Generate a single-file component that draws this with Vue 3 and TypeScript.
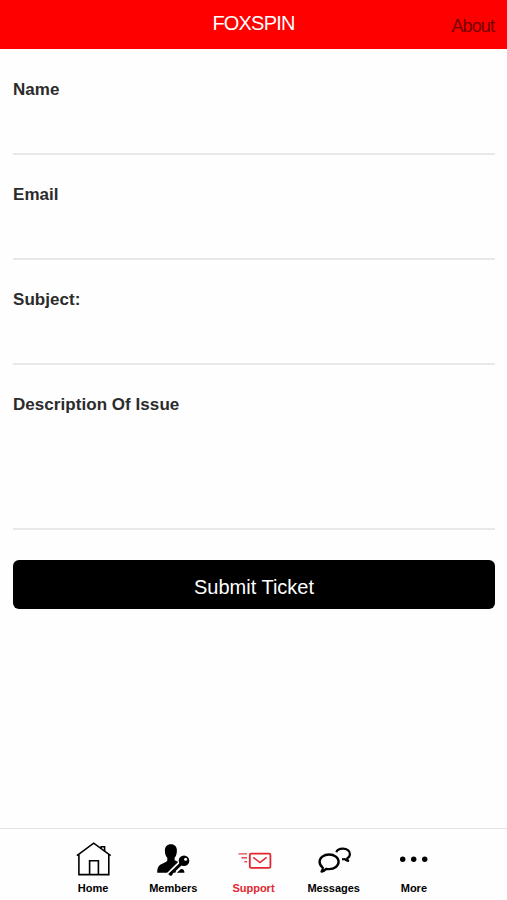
<script setup lang="ts">
import { reactive, ref } from 'vue'

type TabId = 'home' | 'members' | 'support' | 'messages' | 'more'

interface Tab {
  id: TabId
  label: string
}

const tabs: Tab[] = [
  { id: 'home', label: 'Home' },
  { id: 'members', label: 'Members' },
  { id: 'support', label: 'Support' },
  { id: 'messages', label: 'Messages' },
  { id: 'more', label: 'More' },
]

const active = ref<TabId>('support')
const ticket = reactive({ name: '', email: '', subject: '', description: '' })
</script>

<template>
  <div class="screen">
    <header class="header">
      <h1 class="title">FOXSPIN</h1>
      <a class="about">About</a>
    </header>

    <form class="form" @submit.prevent>
      <label class="field">
        <span class="label">Name</span>
        <input v-model="ticket.name" class="input" type="text" />
      </label>
      <label class="field">
        <span class="label">Email</span>
        <input v-model="ticket.email" class="input" type="email" />
      </label>
      <label class="field">
        <span class="label">Subject:</span>
        <input v-model="ticket.subject" class="input" type="text" />
      </label>
      <label class="field tall">
        <span class="label">Description Of Issue</span>
        <textarea v-model="ticket.description" class="input"></textarea>
      </label>
      <button class="submit" type="submit">Submit Ticket</button>
    </form>

    <nav class="tabbar">
      <button
        v-for="tab in tabs"
        :key="tab.id"
        type="button"
        class="tab"
        :class="{ active: active === tab.id }"
        @click="active = tab.id"
      >
        <svg class="icon" viewBox="0 0 40 40" fill="none" stroke="currentColor">
          <g v-if="tab.id === 'home'" stroke-width="1.6">
            <path d="M3.9 15.6 20.7 3.2l17 12.4" />
            <path d="M5.9 14.5v20.1h29.9V14.5" />
            <path d="M16.6 34.5V20.8h8.8v13.7" />
            <path d="M28.2 8.3V6.8h3.4v4.6" />
          </g>
          <g v-else-if="tab.id === 'members'" fill="currentColor" stroke="none">
            <path d="M17.9 4.300c3.800 0 6 2.500 6 6.200 0 3.200-.8 5.700-2.300 7.200v2.500l7 3L17.500 32.700H4.200c0-3.600.6-6.600 3.400-8.200 2.900-1.500 6-2.200 6.700-4v-2.800c-1.600-1.500-2.400-4-2.400-7.200 0-3.700 2.200-6.200 6-6.200z" />
            <path d="M23.800 32.700l3.600-3.200c.8-.8 1.300-.2 2-.2 1.200 0 2 1.500 2 3.400z" />
            <path d="M28 23.500 16.300 35" stroke="#fefefe" stroke-width="6" />
            <circle cx="31" cy="20.800" r="6.400" fill="#fefefe" />
            <path d="M29 22.900 16.300 35" stroke="currentColor" stroke-width="3" />
            <path d="M20.500 30.300l2 2.100M17.400 33l1.500 2.200" stroke="currentColor" stroke-width="1.800" />
            <circle cx="31" cy="20.800" r="5.300" />
            <circle cx="32.600" cy="19.200" r="1.500" fill="#fefefe" />
          </g>
          <g v-else-if="tab.id === 'support'">
            <rect x="15.800" y="13.600" width="20.600" height="14.200" rx="1.400" stroke-width="1.800" />
            <path d="M19.300 17.300 25.900 22.500l6.700-5.200" stroke-width="1.500" />
            <path d="M4.500 13.900H13M7.500 17.700H13M10.400 21.700H13" stroke-width="1.400" opacity="0.85" />
          </g>
          <g v-else-if="tab.id === 'messages'" stroke-width="2.400" stroke-linejoin="round">
            <path d="M8.700 27.600C6.700 26.100 5.600 24.200 5.600 21.800c0-4.100 4.100-7.300 9.500-7.300s9.500 3.200 9.500 7.300-4.100 7.300-9.500 7.300c-1 0-1.900-.1-2.800-.3-1.300 1.500-2.700 2.400-4.700 2.800 1-1.200 1.300-2.300 1.100-4z" />
            <path d="M22.400 12.300c.5-2.200 3.200-3.700 6.600-3.700 3.900 0 6.900 2.300 6.900 5.300 0 1.900-1 3.400-2.600 4.400-.1 1 .2 1.700.9 2.600-1.500-.2-2.500-.7-3.300-1.800-.9.200-1.500.2-2.800 0" stroke-width="2.200" />
          </g>
          <g v-else fill="currentColor" stroke="none">
            <circle cx="8.700" cy="19.300" r="2.700" />
            <circle cx="19.700" cy="19.300" r="2.700" />
            <circle cx="30.700" cy="19.300" r="2.700" />
          </g>
        </svg>
        <span class="tab-label">{{ tab.label }}</span>
      </button>
    </nav>
  </div>
</template>

<style>
body {
  margin: 0;
  background: #fefefe;
}
</style>

<style scoped>
.screen {
  display: flex;
  flex-direction: column;
  height: 900px;
  overflow: hidden;
  background: #fefefe;
  font-family: "Liberation Sans", Arial, sans-serif;
}

.header {
  display: grid;
  grid-template-columns: 1fr auto 1fr;
  box-sizing: border-box;
  height: 49px;
  flex: none;
  padding: 0 13px;
  background: #fe0000;
}

.title {
  grid-column: 2;
  margin: 0;
  padding-top: 12px;
  color: #fff;
  font-size: 20px;
  font-weight: 400;
  line-height: 23px;
  letter-spacing: -0.8px;
}

.about {
  justify-self: end;
  padding-top: 14px;
  color: #750000;
  font-size: 18px;
  line-height: 24px;
  letter-spacing: -0.9px;
}

.form {
  display: flex;
  flex-direction: column;
  flex: 1;
  padding: 1px 12px 0 13px;
}

.field {
  display: flex;
  flex-direction: column;
  box-sizing: border-box;
  height: 105px;
  padding-top: 30px;
  border-bottom: 2px solid #e8e8e8;
}

.field.tall {
  height: 165px;
}

.label {
  color: #2b2b2b;
  font-size: 17px;
  font-weight: 700;
  line-height: 20px;
  letter-spacing: 0.05px;
}

.input {
  flex: 1;
  min-height: 0;
  padding: 0;
  border: 0;
  outline: 0;
  background: transparent;
  font: inherit;
  font-size: 17px;
  resize: none;
}

.submit {
  height: 49px;
  margin-top: 30px;
  padding: 4px 0 0;
  border: 0;
  border-radius: 6px;
  background: #000;
  color: #fff;
  font: 400 20px/24px "Liberation Sans", Arial, sans-serif;
}

.tabbar {
  display: grid;
  grid-template-columns: repeat(5, 80.2px);
  justify-content: center;
  box-sizing: border-box;
  height: 72px;
  flex: none;
  border-top: 1px solid #e3e3e3;
}

.tab {
  display: flex;
  flex-direction: column;
  align-items: center;
  padding: 11px 0 0;
  border: 0;
  background: transparent;
  color: #000;
  font: 700 11px/14px "Liberation Sans", Arial, sans-serif;
}

.tab.active {
  color: #e2262f;
}

.tab-label {
  padding-top: 1px;
}

.icon {
  width: 40px;
  height: 40px;
}
</style>
